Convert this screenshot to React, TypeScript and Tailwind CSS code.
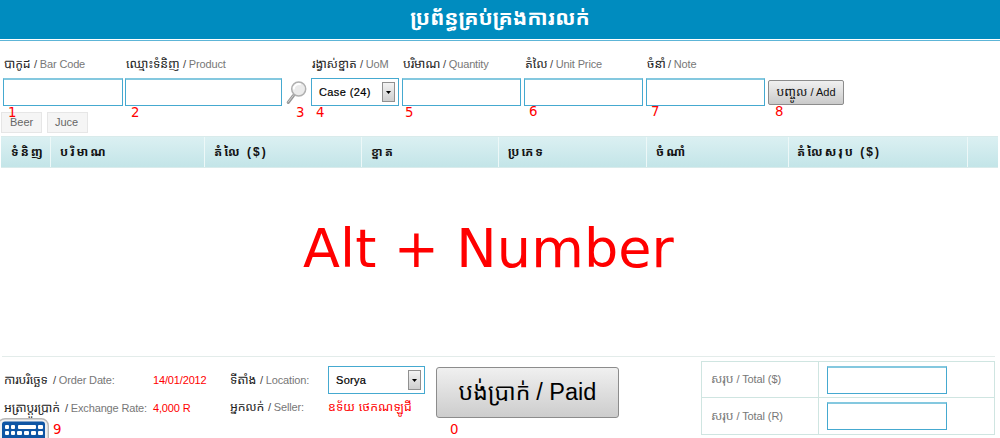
import type { ReactNode } from "react";

function Khmer({ children, className = "" }: { children: ReactNode; className?: string }) {
  return <span className={`inline-block whitespace-nowrap text-[12.3px] ${className}`}>{children}</span>;
}

function Label({ km, en, w }: { km: string; en: string; w: string }) {
  return (
    <div className="flex h-5 items-baseline pl-px text-[11px] leading-5 tracking-[-0.15px] whitespace-nowrap text-[#777]">
      <Khmer className={`text-[#222] ${w}`}>{km}</Khmer>
      <span>
        <span className="text-[#444]">/</span> {en}
      </span>
    </div>
  );
}

function TextBox({ className = "" }: { className?: string }) {
  return (
    <input
      className={`block h-[28px] border border-t-2 border-[#45a9d0] border-t-[#84c8df] bg-white outline-none ${className}`}
    />
  );
}

function Select({ value, className = "" }: { value: string; className?: string }) {
  return (
    <div
      className={`flex h-[28px] items-center justify-between border border-[#45a9d0] bg-white pr-[3px] pl-[7px] text-[11px] text-black ${className}`}
    >
      <span className="[-webkit-text-stroke:0.2px_#000]">{value}</span>
      <span className="flex h-5 w-[13px] items-center justify-center border border-[#909090] bg-linear-to-b from-[#f3f3f3] to-[#cfcfcf]">
        <svg width="5" height="3" viewBox="0 0 5 3">
          <path d="M0 0h5L2.5 3z" fill="#000" />
        </svg>
      </span>
    </div>
  );
}

function SearchIcon() {
  return (
    <svg width="22" height="24" viewBox="0 0 22 24" fill="none">
      <path d="M7.5 14.5L2.2 21.5" stroke="#999" strokeWidth="3" strokeLinecap="round" />
      <path d="M7.3 14.5L2.2 21" stroke="#ccc" strokeWidth="1" strokeLinecap="round" />
      <circle cx="12.7" cy="8" r="7" fill="#ebebeb" stroke="#b0b0b0" strokeWidth="1.5" />
      <path d="M7.8 8.5a5 5 0 0 1 7-5" stroke="#fff" strokeWidth="1.8" />
    </svg>
  );
}

function KeyboardIcon() {
  return (
    <svg width="50" height="20" viewBox="0 0 50 20">
      <rect x="-2" y="0.7" width="50.3" height="30" rx="7" fill="#efefef" stroke="#b8b8b8" strokeWidth="1.4" />
      <rect x="2" y="3.5" width="43" height="24" rx="3" fill="#0e55a4" />
      <g fill="#fff">
        <rect x="5" y="7" width="4" height="4" rx="1" />
        <rect x="11" y="7" width="4" height="4" rx="1" />
        <rect x="18" y="7" width="18" height="4" rx="1" />
        <rect x="38" y="7" width="5" height="4" rx="1" />
        <rect x="5" y="13" width="4" height="4" rx="1" />
        <rect x="11" y="13" width="4" height="4" rx="1" />
        <rect x="17" y="13" width="5" height="4" rx="1" />
        <rect x="24" y="13" width="5" height="4" rx="1" />
        <rect x="31" y="13" width="5" height="4" rx="1" />
        <rect x="38" y="13" width="5" height="4" rx="1" />
      </g>
    </svg>
  );
}

function Hint({ n, className }: { n: string; className: string }) {
  return (
    <span className={`absolute font-['DejaVu_Sans',sans-serif] text-[13.3px] leading-4 text-[#ff0000] ${className}`}>
      {n}
    </span>
  );
}

const columns = [
  { title: "ទំនិញ", cell: "w-[50px] pl-[10px]" },
  { title: "បរិមាណ", cell: "w-[154px] pl-[9px]" },
  { title: "តំលៃ ($)", cell: "w-[157px] pl-[9px]" },
  { title: "ខ្នាត", cell: "w-[137px] pl-[9px]" },
  { title: "ប្រភេទ", cell: "w-[148px] pl-[9px]" },
  { title: "ចំណាំ", cell: "w-[142px] pl-[9px]" },
  { title: "តំលៃសរុប ($)", cell: "w-[179px] pl-[8px]" },
  { title: "", cell: "w-[30px]" },
];

export default function App() {
  return (
    <div className="relative flex h-[438px] w-[1000px] flex-col overflow-hidden bg-white font-['Liberation_Sans','Noto_Sans_Khmer',sans-serif]">
      <header className="h-[39px] shrink-0 bg-[#008cbf] text-center text-[21px] leading-[35px] font-bold text-white">
        ប្រព័ន្ធគ្រប់គ្រងការលក់
      </header>
      <div className="mt-px h-px shrink-0 bg-[#5db5d7]" />

      <div className="flex h-[65px] shrink-0 items-start pt-[13px] pl-[3px]">
        <div className="w-[122px]">
          <Label km="បាកូដ" en="Bar Code" w="w-[30px]" />
          <TextBox className="mt-[4px] w-[120px]" />
        </div>
        <div className="w-[160px]">
          <Label km="ឈ្មោះទំនិញ" en="Product" w="w-[57px]" />
          <TextBox className="mt-[4px] w-[157px]" />
        </div>
        <div className="w-[26px] pt-[27px] pl-px">
          <SearchIcon />
        </div>
        <div className="w-[91px]">
          <Label km="រង្វាស់ខ្នាត" en="UoM" w="w-[48px]" />
          <Select value="Case (24)" className="mt-[4px] w-[88px] tracking-[0.4px]" />
        </div>
        <div className="w-[122px]">
          <Label km="បរិមាណ" en="Quantity" w="w-[40px]" />
          <TextBox className="mt-[4px] w-[119px]" />
        </div>
        <div className="w-[122px]">
          <Label km="តំលៃ" en="Unit Price" w="w-[25px]" />
          <TextBox className="mt-[4px] w-[119px]" />
        </div>
        <div className="w-[122px]">
          <Label km="ចំនាំ" en="Note" w="w-[21px]" />
          <TextBox className="mt-[4px] w-[119px]" />
        </div>
        <button className="mt-[26px] flex h-[25px] w-[76px] items-baseline justify-center gap-[3px] rounded-[2px] border border-[#8c8c8c] bg-linear-to-b from-[#f0f0f0] via-[#dedede] to-[#cacaca] text-[11px] leading-[22px] text-[#111]">
          <Khmer>បញ្ចូល</Khmer>/ Add
        </button>
      </div>

      <div className="mt-[6px] flex h-[21px] shrink-0 gap-[5px] pl-px text-[11px] leading-[19px] text-[#666]">
        <span className="w-[41px] border border-[#e6e6e6] bg-[#f5f5f5] pl-[8px]">Beer</span>
        <span className="w-[41px] border border-[#e6e6e6] bg-[#f5f5f5] pl-[7px]">Juce</span>
      </div>

      <div className="mt-[3px] ml-px flex h-[32px] w-[997px] shrink-0 border-t border-b border-[#d9ebeb] bg-linear-to-b from-[#dbf0f2] to-[#c3e5e8]">
        {columns.map((c, i) => (
          <div
            key={i}
            className={`shrink-0 border-r border-[#edf8f8] text-[12px] leading-[30px] font-bold tracking-[2px] whitespace-nowrap text-[#111] last:border-r-0 ${c.cell}`}
          >
            {c.title}
          </div>
        ))}
      </div>

      <main className="flex h-[188px] shrink-0 items-center justify-center pr-[23px] pb-[26px] font-['DejaVu_Sans',sans-serif] text-[54px] leading-none tracking-[0.1px] text-[#ff0000]">
        Alt + Number
      </main>

      <footer className="mr-[5px] ml-[2px] flex grow border-t border-[#e3ecea]">
        <div className="w-[226px] pt-[13px] pl-px">
          <div className="flex">
            <div className="w-[150px]">
              <Label km="ការបរិច្ឆេទ" en="Order Date:" w="w-[49px]" />
            </div>
            <span className="text-[11px] leading-[21px] tracking-[-0.15px] text-[#ff0000]">14/01/2012</span>
          </div>
          <div className="mt-[7px] flex">
            <div className="w-[150px]">
              <Label km="អត្រាប្តូរប្រាក់" en="Exchange Rate:" w="w-[61px]" />
            </div>
            <span className="text-[11px] leading-[20px] tracking-[-0.15px] text-[#ff0000]">4,000 R</span>
          </div>
        </div>
        <div className="w-[208px] pt-[9px] pl-px">
          <div className="flex">
            <div className="w-[99px] pt-[4px]">
              <Label km="ទីតាំង" en="Location:" w="w-[30px]" />
            </div>
            <Select value="Sorya" className="w-[97px] tracking-[0.3px]" />
          </div>
          <div className="mt-[3px] flex">
            <div className="w-[99px]">
              <Label km="អ្នកលក់" en="Seller:" w="w-[38px]" />
            </div>
            <span className="text-[12.3px] leading-[20px] tracking-[0.1px] text-[#ff0000]">ឧទ័យ ថេកណឡូជី</span>
          </div>
        </div>
        <button className="mt-[10px] flex h-[51px] w-[183px] items-baseline justify-center gap-[6px] rounded-[3px] border border-[#8c8c8c] bg-linear-to-b from-[#f0f0f0] via-[#dedede] to-[#cdcdcd] text-[23.5px] leading-[49px] text-black">
          <span className="text-[23px]">បង់ប្រាក់</span>/ Paid
        </button>
        <div className="mt-[4px] ml-[82px] grid h-[74px] w-[294px] grid-cols-[117px_1fr] grid-rows-2 border border-[#cfe5e1] text-[11px] text-[#777]">
          <div className="flex items-center gap-[3px] border-r border-b border-[#cfe5e1] pl-[9px] tracking-[-0.1px]">
            <Khmer>សរុប</Khmer>/ Total ($)
          </div>
          <div className="border-b border-[#cfe5e1] pt-[4px] pl-[8px]">
            <TextBox className="w-[120px]" />
          </div>
          <div className="flex items-center gap-[3px] border-r border-[#cfe5e1] pl-[9px] tracking-[-0.1px]">
            <Khmer>សរុប</Khmer>/ Total (R)
          </div>
          <div className="pt-[4px] pl-[8px]">
            <TextBox className="w-[120px]" />
          </div>
        </div>
      </footer>

      <div className="absolute top-[418px] left-0">
        <KeyboardIcon />
      </div>
      <Hint n="1" className="top-[105px] left-[8px]" />
      <Hint n="2" className="top-[105px] left-[131px]" />
      <Hint n="3" className="top-[105px] left-[296px]" />
      <Hint n="4" className="top-[105px] left-[316px]" />
      <Hint n="5" className="top-[105px] left-[405px]" />
      <Hint n="6" className="top-[104px] left-[529px]" />
      <Hint n="7" className="top-[104px] left-[651px]" />
      <Hint n="8" className="top-[104px] left-[775px]" />
      <Hint n="9" className="top-[422px] left-[53px]" />
      <Hint n="0" className="top-[422px] left-[450px]" />
    </div>
  );
}
